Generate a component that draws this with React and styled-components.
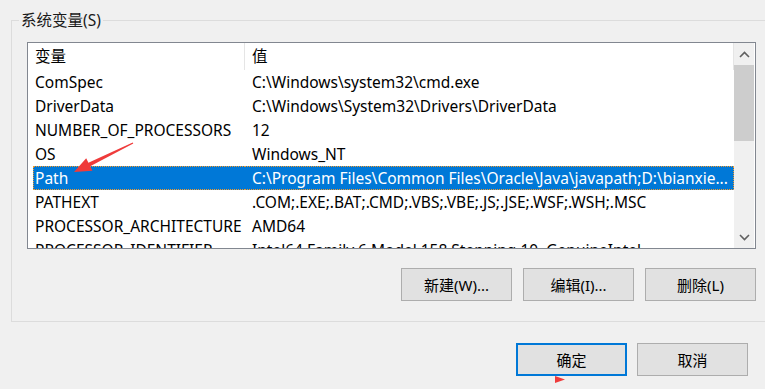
import React from "react";
import styled, { createGlobalStyle } from "styled-components";

const Global = createGlobalStyle`
  html, body { margin: 0; padding: 0; }
  body {
    background: #f0f0f0;
    width: 765px;
    height: 389px;
    overflow: hidden;
    font-family: "Noto Sans", "Noto Sans CJK SC", sans-serif;
    font-size: 15.5px;
    color: #000;
  }
`;

const Page = styled.div`
  position: relative;
  width: 765px;
  height: 389px;
  padding-top: 20px;
  box-sizing: border-box;
`;

const GroupBox = styled.div`
  margin: 0 -10px 0 11px;
  border: 1px solid #dcdcdc;
  padding: 0 0 20px 15px;
`;

const GroupTitle = styled.div`
  display: table;
  margin: -11px 0 0 -8px;
  padding: 0 2px;
  line-height: 20px;
  background: #f0f0f0;
  color: #1a1a1a;
`;

const ListBox = styled.div`
  margin-top: 12px;
  width: 729px;
  height: 207px;
  box-sizing: border-box;
  border: 1px solid #828790;
  background: #fff;
  display: flex;
  overflow: hidden;
`;

const TableArea = styled.div`
  flex: 1;
  min-width: 0;
  padding-left: 5px;
  overflow: hidden;
`;

const Grid = styled.div`
  display: grid;
  grid-template-columns: 212px 1fr;
`;

const HeaderCell = styled.div`
  height: 27px;
  line-height: 27px;
  padding-left: ${(p) => (p.$first ? "2px" : "7px")};
  border-right: 1px solid #e5e5e5;
  white-space: nowrap;
`;

const Row = styled.div`
  display: contents;
`;

const Cell = styled.div`
  height: 24px;
  white-space: nowrap;
  overflow: hidden;
  box-sizing: border-box;
  background: ${(p) => (p.$selected ? "#0078d7" : "transparent")};
  color: ${(p) => (p.$selected ? "#fff" : "#000")};
  border-top: ${(p) => (p.$selected ? "1px dotted #f39a2c" : "none")};
  border-bottom: ${(p) => (p.$selected ? "1px dotted #f39a2c" : "none")};
  border-left: ${(p) => (p.$selected && p.$first ? "1px dotted #f39a2c" : "none")};
  border-right: ${(p) => (p.$selected && !p.$first ? "1px dotted #f39a2c" : "none")};
  line-height: ${(p) => (p.$selected ? "22px" : "24px")};
  padding-left: ${(p) =>
    p.$first ? (p.$selected ? "1px" : "2px") : "7px"};
`;

const ScrollBar = styled.div`
  width: 20px;
  margin-right: 1px;
  background: #f0f0f0;
  display: flex;
  flex-direction: column;
`;

const ScrollButton = styled.div`
  height: 22px;
  display: flex;
  align-items: center;
  justify-content: center;
`;

const Thumb = styled.div`
  height: 76px;
  background: #cdcdcd;
`;

const Track = styled.div`
  flex: 1;
`;

const ButtonRow = styled.div`
  width: 729px;
  margin-top: 19px;
  display: flex;
  justify-content: flex-end;
  gap: 11px;
`;

const Button = styled.button`
  width: 111px;
  height: 33px;
  box-sizing: border-box;
  background: #e1e1e1;
  border: ${(p) => (p.$default ? "2px solid #0078d7" : "1px solid #adadad")};
  font-family: inherit;
  font-size: 15px;
  color: #000;
  padding: 0;
  margin: 0;
`;

const Footer = styled.div`
  margin-top: 21px;
  padding-right: 17px;
  display: flex;
  justify-content: flex-end;
  gap: 10px;
`;

const Overlay = styled.svg`
  position: absolute;
  left: 0;
  top: 0;
  pointer-events: none;
`;

const rows = [
  ["ComSpec", "C:\\Windows\\system32\\cmd.exe"],
  ["DriverData", "C:\\Windows\\System32\\Drivers\\DriverData"],
  ["NUMBER_OF_PROCESSORS", "12"],
  ["OS", "Windows_NT"],
  ["Path", "C:\\Program Files\\Common Files\\Oracle\\Java\\javapath;D:\\bianxie...", true],
  ["PATHEXT", ".COM;.EXE;.BAT;.CMD;.VBS;.VBE;.JS;.JSE;.WSF;.WSH;.MSC"],
  ["PROCESSOR_ARCHITECTURE", "AMD64"],
  ["PROCESSOR_IDENTIFIER", "Intel64 Family 6 Model 158 Stepping 10, GenuineIntel"],
];

const Chevron = ({ up }) => (
  <svg width="11" height="7" viewBox="0 0 11 7">
    <path
      d={up ? "M1 6 L5.5 1.5 L10 6" : "M1 1 L5.5 5.5 L10 1"}
      fill="none"
      stroke="#606060"
      strokeWidth="1.6"
    />
  </svg>
);

export default function App() {
  return (
    <>
      <Global />
      <Page>
        <GroupBox>
          <GroupTitle>系统变量(S)</GroupTitle>
          <ListBox>
            <TableArea>
              <Grid>
                <HeaderCell $first>变量</HeaderCell>
                <HeaderCell>值</HeaderCell>
                {rows.map(([name, value, sel]) => (
                  <Row key={name}>
                    <Cell $first $selected={sel}>{name}</Cell>
                    <Cell $selected={sel}>{value}</Cell>
                  </Row>
                ))}
              </Grid>
            </TableArea>
            <ScrollBar>
              <ScrollButton>
                <Chevron up />
              </ScrollButton>
              <Thumb />
              <Track />
              <ScrollButton>
                <Chevron />
              </ScrollButton>
            </ScrollBar>
          </ListBox>
          <ButtonRow>
            <Button>新建(W)...</Button>
            <Button>编辑(I)...</Button>
            <Button>删除(L)</Button>
          </ButtonRow>
        </GroupBox>
        <Footer>
          <Button $default>确定</Button>
          <Button>取消</Button>
        </Footer>
        <Overlay width="765" height="389" viewBox="0 0 765 389">
          <polygon
            points="86.2,158.2 74,172 92.4,170.8 90.2,166.3 133.3,143.6 132.7,142.4 88.4,162.7"
            fill="#ef3b3b"
          />
          <polygon points="555,376 565,379.5 555,383" fill="#ef3b3b" />
        </Overlay>
      </Page>
    </>
  );
}
